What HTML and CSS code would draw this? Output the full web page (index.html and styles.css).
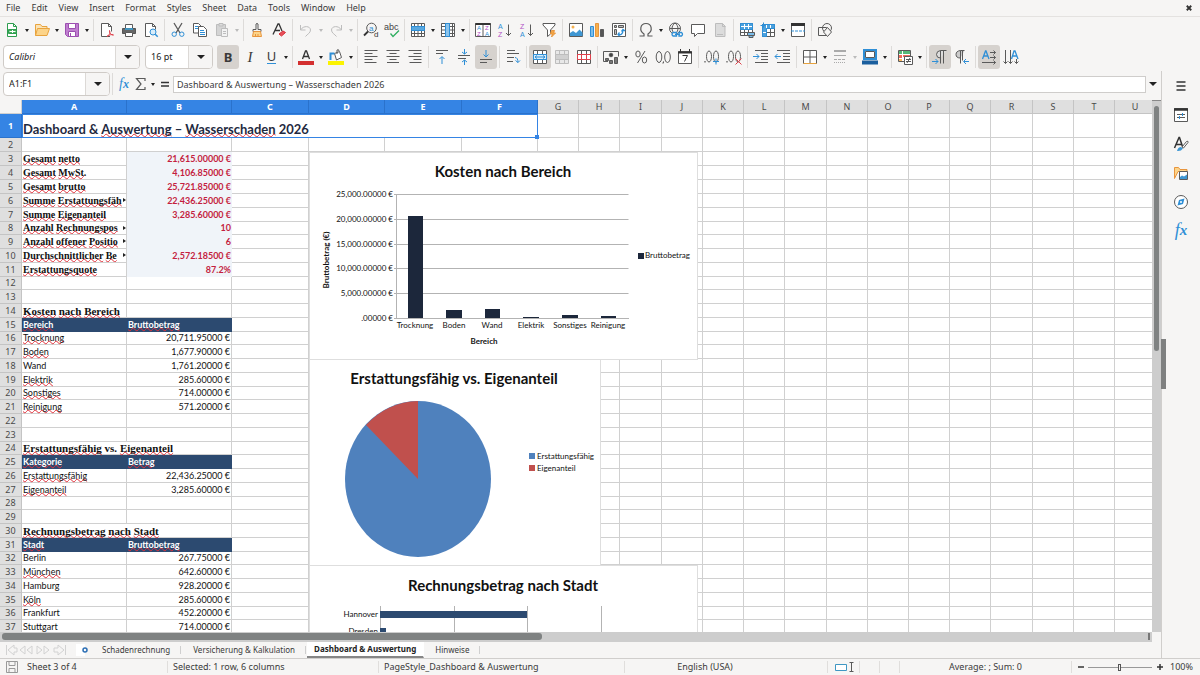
FILE: index.html
```html
<!DOCTYPE html>
<html lang="de">
<head>
<meta charset="utf-8">
<title>Dashboard &amp; Auswertung</title>
<link rel="stylesheet" href="styles.css">
</head>
<body>
<nav class="menubar" aria-label="Menu">
  <button>File</button><button>Edit</button><button>View</button><button>Insert</button><button>Format</button><button>Styles</button><button>Sheet</button><button>Data</button><button>Tools</button><button>Window</button><button>Help</button>
  <button class="close" aria-label="Close document"><svg class="ic" viewBox="0 0 16 16"><path class="d" stroke-width="2.4" d="M5 5l6 6M11 5l-6 6"/></svg></button>
</nav>

<div class="toolbar standard" role="toolbar" aria-label="Standard">
  <button class="tb" aria-label="New"><svg class="ic" viewBox="0 0 16 16"><path fill="#fff" stroke="#2e9e4f" d="M3.5 1.5h6l3 3v10h-9z"/><path stroke="#2e9e4f" d="M9.5 1.5v3h3"/><path fill="#43b05c" stroke="#2e9e4f" d="M4.500 7.500h8v4h-8z"/><path stroke="#fff" d="M5.500 9.500h6M8.500 8v3"/></svg></button><button class="caret" aria-label="New options"></button>
  <button class="tb" aria-label="Open"><svg class="ic" viewBox="0 0 16 16"><path fill="#fbe3b5" stroke="#e8a33d" d="M1.500 13.500v-11h5l1.500 2h5v2"/><path fill="#fcd48a" stroke="#e8a33d" d="M3.500 6.500h12l-2.500 7h-11.500z"/></svg></button><button class="caret" aria-label="Open options"></button>
  <button class="tb" aria-label="Save"><svg class="ic" viewBox="0 0 16 16"><path fill="#c07fd0" stroke="#9c4fb0" d="M1.500 1.500h13v13h-11l-2-2z"/><path fill="#fff" stroke="#9c4fb0" d="M4.500 1.500h7v5h-7z"/><path fill="#fff" stroke="#9c4fb0" d="M4.500 9.500h7v5h-7z"/><path stroke="#9c4fb0" d="M6.500 11v3"/></svg></button><button class="caret" aria-label="Save options"></button>
  <span class="sep"></span>
  <button class="tb" aria-label="Export as PDF"><svg class="ic" viewBox="0 0 16 16"><path fill="#fff" class="k" d="M11 14.500h-8.500v-13h7l3 3v5"/><path class="k" d="M9.500 1.500v3h3"/><path class="r" d="M8 14.500c3-2 3-4 2.500-6c0 3 1.500 4.500 4 4.500c-2-1-4.500 0-6.500 1.500"/></svg></button>
  <button class="tb" aria-label="Print"><svg class="ic" viewBox="0 0 16 16"><path fill="#fff" class="k" d="M4.500 2.500h7v4h-7z"/><path fill="#666" stroke="#555" d="M1.500 6.500h13v5h-13z"/><path stroke="#3aa6dd" stroke-width="1.500" d="M4 7h8"/><path fill="#fff" class="k" d="M4.500 10.500h7v4h-7z"/></svg></button>
  <button class="tb" aria-label="Print preview"><svg class="ic" viewBox="0 0 16 16"><path fill="#fff" class="k" d="M7 14.500h-4.500v-13h7l3 3v3"/><path class="k" d="M9.500 1.500v3h3"/><circle fill="#d7ecfa" class="b" cx="10" cy="10" r="3"/><path class="b" stroke-width="1.500" d="M12.200 12.200l2.500 2.500"/></svg></button>
  <span class="sep"></span>
  <button class="tb" aria-label="Cut"><svg class="ic" viewBox="0 0 16 16"><path class="k" stroke-width="1.300" d="M4 1l6 10M12 1l-6 10"/><circle class="b" cx="4.200" cy="12.200" r="2.200"/><circle class="b" cx="11.800" cy="12.200" r="2.200"/></svg></button>
  <button class="tb" aria-label="Copy"><svg class="ic" viewBox="0 0 16 16"><path fill="#fff" class="k" d="M1.500 1.500h5l2.500 2.500v7h-7.500z"/><path fill="#fff" class="k" d="M6.500 4.500h5l3 3v7h-8z"/><path class="b" d="M3 4.500h3M3 6.500h3M8 8.500h4M8 10.500h5M8 12.500h5"/></svg></button>
  <button class="tb" aria-label="Paste" disabled><svg class="ic" viewBox="0 0 16 16"><path fill="#d4d4d4" class="g" d="M2.500 2.500h9v11h-9z"/><path fill="#ddd" class="g" d="M5 1.500h4v2.500h-4z"/><path fill="#f3f3f3" class="g" d="M7.500 6.500h6v8h-6z"/><path class="g" d="M9 9.500h3M9 11.500h3"/></svg></button><button class="caret" aria-label="Paste options" disabled></button>
  <span class="sep"></span>
  <button class="tb" aria-label="Clone formatting"><svg class="ic" viewBox="0 0 16 16"><path class="k" d="M7 7.500v-5.500q1-1.200 2 0v5.500h3v2h-8v-2z"/><path fill="#fcd48a" stroke="#e8953d" d="M4.500 9.500h7l1 5h-9zM6.500 12v2M9 12v2"/></svg></button>
  <button class="tb" aria-label="Clear formatting"><svg class="ic" viewBox="0 0 16 16"><path class="d" stroke-width="1.300" d="M2 12.500l5-10.500h1l3 7M4 8.500h5"/><path fill="#e8505b" stroke="#d8303b" d="M8 12l4-3 2.500 1.500-4 3.500z"/></svg></button>
  <span class="sep"></span>
  <button class="tb" aria-label="Undo" disabled><svg class="ic" viewBox="0 0 16 16"><path class="g" d="M2.500 3v5h5M2.500 8c3-5 10-4 10 0c0 3-3 4-5 6.500"/></svg></button><button class="caret" aria-label="Undo steps" disabled></button>
  <button class="tb" aria-label="Redo" disabled><svg class="ic" viewBox="0 0 16 16"><path class="g" d="M13.500 3v5h-5M13.500 8c-3-5-10-4-10 0c0 3 3 4 5 6.500"/></svg></button><button class="caret" aria-label="Redo steps" disabled></button>
  <span class="sep"></span>
  <button class="tb snug" aria-label="Find and replace"><svg class="ic" viewBox="0 0 16 16"><circle class="k" cx="8.500" cy="6" r="4.800"/><path class="d" stroke-width="1.800" d="M5 9.500l-4 4"/><text x="6" y="8.500" font-size="8" fill="#2f8fd6">a</text><text x="11" y="15" font-size="8" fill="#333">d</text></svg></button>
  <button class="tb snug" aria-label="Spelling"><svg class="ic" viewBox="0 0 16 16"><text x="0" y="8" font-size="9" fill="#444">abc</text><path stroke="#2fae5f" stroke-width="1.300" d="M6.500 11.500l2.500 3 6-6"/></svg></button>
  <span class="sep"></span>
  <button class="tb" aria-label="Row"><svg class="ic" viewBox="0 0 16 16"><path fill="#fff" class="k" d="M1.500 1.500h13v13h-13zM4.500 1.500v13M8 1.500v13M11.500 1.500v13M1.500 11.500h13"/><path fill="#59a8e0" class="b" d="M1.500 4.500h13v4h-13z"/></svg></button><button class="caret" aria-label="Row options"></button>
  <button class="tb" aria-label="Column"><svg class="ic" viewBox="0 0 16 16"><path fill="#fff" class="k" d="M1.500 1.500h13v13h-13zM1.500 4.500h13M1.500 8h13M1.500 11.500h13M12.500 1.500v13"/><path fill="#8cc4ec" class="b" d="M5.500 1.500h4v13h-4z"/></svg></button><button class="caret" aria-label="Column options"></button>
  <span class="sep"></span>
  <button class="tb" aria-label="Sort"><svg class="ic" viewBox="0 0 16 16"><path fill="#fff" class="k" d="M.5 1.500h15v13h-15zM8 1.500v13"/><path class="d" stroke-width="2" d="M.5 2h15"/><text x="2" y="7.500" font-size="6" fill="#2f8fd6">A</text><text x="2" y="14" font-size="6" fill="#b14fc5">Z</text><text x="10" y="7.500" font-size="6" fill="#b14fc5">Z</text><text x="10" y="14" font-size="6" fill="#2f8fd6">A</text></svg></button>
  <button class="tb" aria-label="Sort ascending"><svg class="ic" viewBox="0 0 16 16"><text x="1" y="7" font-size="7" fill="#2f8fd6">A</text><text x="1" y="15" font-size="7" fill="#b14fc5">Z</text><path class="k" d="M11.500 2.500v11M9 11l2.500 2.500 2.500-2.500"/></svg></button>
  <button class="tb" aria-label="Sort descending"><svg class="ic" viewBox="0 0 16 16"><text x="1" y="7" font-size="7" fill="#b14fc5">Z</text><text x="1" y="15" font-size="7" fill="#2f8fd6">A</text><path class="k" d="M11.500 2.500v11M9 11l2.500 2.500 2.500-2.500"/></svg></button>
  <button class="tb" aria-label="AutoFilter"><svg class="ic" viewBox="0 0 16 16"><path fill="#fff" class="k" d="M2 1.500h12v1.500l-4.500 5v4l-3 2.500v-6.500l-4.500-5z"/><path fill="#f5a742" stroke="#e8953d" d="M10.500 8.500h3l-1 2.500h2l-4 4 1-3h-2z"/></svg></button>
  <span class="sep"></span>
  <button class="tb snug" aria-label="Insert image"><svg class="ic" viewBox="0 0 16 16"><path fill="#fff" class="k" d="M1.500 1.500h13v13h-13z"/><circle cx="5" cy="5" r="1.500" fill="#f5b14f"/><path fill="#3f97d3" d="M2 14v-3l3-2 3 2 3.500-3.500 3 3v3.500z"/></svg></button>
  <button class="tb" aria-label="Insert chart"><svg class="ic" viewBox="0 0 16 16"><path fill="#7bbdea" class="b" d="M1.500 4.500h3v10h-3z"/><path fill="#f5b14f" stroke="#e8953d" d="M6.500 1.500h3v13h-3z"/><path fill="#555" class="k" d="M11.500 7.500h3v7h-3z"/></svg></button>
  <button class="tb" aria-label="Pivot table"><svg class="ic" viewBox="0 0 16 16"><path fill="#fff" class="k" d="M1.500 1.500h13v13h-13z"/><path fill="#bbb" class="k" d="M3.500 3.500h2v2h-2zM7.500 3.500h5v2h-5zM3.500 7.500h2v5h-2z"/><path class="b" stroke-width="1.300" d="M7 12.500c3 1 5-1 5-4.500M10.500 9.500l1.500-2 2 1.500M8.500 10.500l-1.500 2 1.500 1.500"/></svg></button>
  <span class="sep"></span>
  <button class="tb" aria-label="Special character"><svg class="ic" viewBox="0 0 16 16"><path class="k" stroke-width="1.200" d="M1.500 14h4.500v-2c-5-3-4-10.500 2-10.500s7 7.500 2 10.500v2h4.500"/></svg></button><button class="caret" aria-label="More characters"></button>
  <button class="tb" aria-label="Insert hyperlink"><svg class="ic" viewBox="0 0 16 16"><circle class="k" cx="7" cy="6.500" r="5.500"/><path class="k" d="M1.500 6.500h11M7 1c-4 3-4 8 0 11M7 1c4 3 4 8 0 11"/><path fill="#f6f5f4" class="b" stroke-width="1.300" d="M5 10.500h3.500v3.500h-3.500q-2-1.700 0-3.500zM11 10.500h2.500q2 1.700 0 3.500h-2.500zM7 12.300h5"/></svg></button>
  <button class="tb" aria-label="Insert comment"><svg class="ic" viewBox="0 0 16 16"><path fill="#fff" class="k" d="M1.500 2.500h13v9h-7l-3 3v-3h-3z"/></svg></button>
  <button class="tb" aria-label="Headers and footers" disabled><svg class="ic" viewBox="0 0 16 16"><path fill="#dcdcdc" class="g" d="M3.500 1.500h7l2.500 2.500v10.500h-9.500z"/><path class="g" d="M10.500 1.500v3h3M5 12.500h6"/></svg></button>
  <span class="sep"></span>
  <button class="tb snug" aria-label="Define print area"><svg class="ic" viewBox="0 0 16 16"><path fill="#fff" class="k" d="M1.500 1.500h12v12h-12zM5.500 1.500v12M9.500 1.500v12M1.500 10.500h12"/><path fill="#4ba0dc" class="b" d="M1.500 1.500h12v6h-12z"/><path stroke="#fff" d="M5.500 2v5M9.500 2v5M2 4.500h11"/><path fill="#7bbdea" class="k" d="M8.500 10.500h7v3h-7zM10 13.500h4v2h-4z"/></svg></button>
  <button class="tb" aria-label="Freeze rows and columns"><svg class="ic" viewBox="0 0 16 16"><path fill="#fff" class="k" d="M2.500 2.500h12v12h-12zM10.500 2.500v12M2.500 10.500h12"/><path fill="#4ba0dc" class="b" d="M2.500 2.500h12v4h-8v8h-4z"/><path stroke="#fff" d="M6.500 3v3M10.500 3v3M3 10.500h3"/><path class="b" d="M.5 3.500h5M3.500.5v5"/></svg></button><button class="caret" aria-label="Freeze options"></button>
  <button class="tb" aria-label="Split window"><svg class="ic" viewBox="0 0 16 16"><path fill="#fff" class="k" d="M1.500 1.500h13v13h-13z"/><path class="d" stroke-width="3" d="M1 2.500h14"/><path class="b" stroke-dasharray="3 1" d="M1 9h14"/></svg></button>
  <span class="sep"></span>
  <button class="tb" aria-label="Show draw functions"><svg class="ic" viewBox="0 0 16 16"><path class="k" d="M1.500 5.500h8v8h-8z"/><circle class="k" cx="10" cy="6" r="4.500"/><path fill="#f6f5f4" class="k" d="M10.500 5.500l4 4.500-4 4.500-4-4.500z"/></svg></button>
</div>

<div class="toolbar formatting" role="toolbar" aria-label="Formatting">
  <div class="combo font-name"><input class="italic" aria-label="Font name" value="Calibri"><button class="drop" aria-label="Font list"></button></div>
  <div class="combo font-size"><input aria-label="Font size" value="16 pt"><button class="drop" aria-label="Size list"></button></div>
  <button class="tb on letter bold" aria-label="Bold">B</button>
  <button class="tb letter cursive" aria-label="Italic">I</button>
  <button class="tb snug letter" aria-label="Underline"><span class="under">U</span></button><button class="caret" aria-label="Underline styles"></button>
  <span class="sep"></span>
  <button class="tb" aria-label="Font color"><svg class="ic" viewBox="0 0 16 16"><path class="d" stroke-width="1.300" d="M4.500 10l3-8h1l3 8M5.500 7.500h5"/><path fill="#d43030" d="M0 12h16v4h-16z"/></svg></button><button class="caret" aria-label="Font colors"></button>
  <button class="tb" aria-label="Highlighting color"><svg class="ic" viewBox="0 0 16 16"><path fill="#fff" class="k" d="M6.500 4.500l5-2 2 6-5 2.500zM9 5v-4q2-1 2 1"/><path stroke="#2f8fd6" stroke-width="2" d="M2.500 11v-6.500h4"/><path fill="#fbf300" d="M0 12h16v4h-16z"/></svg></button><button class="caret" aria-label="Highlighting colors"></button>
  <span class="sep"></span>
  <button class="tb" aria-label="Align left"><svg class="ic" viewBox="0 0 16 16"><path class="k" d="M1.500 1.500h13M1.500 4.500h8M1.500 7.500h13M1.500 10.500h8M1.500 13.500h12"/></svg></button>
  <button class="tb" aria-label="Center horizontally"><svg class="ic" viewBox="0 0 16 16"><path class="k" d="M1.500 1.500h13M4.500 4.500h7M1.500 7.500h13M4.500 10.500h7M2 13.500h12"/></svg></button>
  <button class="tb" aria-label="Align right"><svg class="ic" viewBox="0 0 16 16"><path class="k" d="M1.500 1.500h13M6.500 4.500h8M1.500 7.500h13M6.500 10.500h8M2.500 13.500h12"/></svg></button>
  <span class="sep"></span>
  <button class="tb" aria-label="Align top"><svg class="ic" viewBox="0 0 16 16"><path class="k" d="M2 1.500h12M2 4.500h7"/><path class="b" d="M8 15v-7M5.500 10l2.500-2.500 2.500 2.500"/></svg></button>
  <button class="tb" aria-label="Center vertically"><svg class="ic" viewBox="0 0 16 16"><path class="k" d="M2 6.500h12M2 9.500h8"/><path class="b" d="M8.500 0v5M6 3l2.500 2 2.500-2M8.500 16v-5M6 13l2.500-2 2.500 2"/></svg></button>
  <button class="tb on" aria-label="Align bottom"><svg class="ic" viewBox="0 0 16 16"><path class="k" d="M2 10.500h12M2 13.500h7"/><path class="b" d="M8 1v7M5.500 5.500l2.500 2.500 2.500-2.500"/></svg></button>
  <span class="sep"></span>
  <button class="tb" aria-label="Wrap text"><svg class="ic" viewBox="0 0 16 16"><path class="k" d="M2 1.500h8M2 4.500h12M2 8.500h7M2 12.500h6"/><path class="b" d="M10 8.500q3 0 3 5M10.500 11.500l2.500 2 2-2"/></svg></button>
  <span class="sep"></span>
  <button class="tb on" aria-label="Merge and center cells"><svg class="ic" viewBox="0 0 16 16"><path fill="#fff" class="k" d="M1.500 1.500h13v13h-13zM5.500 1.500v4M10.500 1.500v4M5.500 10.500v4M10.500 10.500v4"/><path fill="#d7ecfa" class="b" d="M1.500 5.500h13v5h-13zM3 8h10M5 6.500l-2 1.500 2 1.500M11 6.500l2 1.500-2 1.500"/></svg></button>
  <button class="tb" aria-label="Merge cells" disabled><svg class="ic" viewBox="0 0 16 16"><path fill="#e8e8e8" class="g" d="M1.500 1.500h13v13h-13zM5.500 1.500v4M10.500 1.500v4M5.500 10.500v4M10.500 10.500v4"/><path fill="#d0d0d0" class="g" d="M1.500 5.500h13v5h-13z"/></svg></button>
  <button class="tb" aria-label="Unmerge cells"><svg class="ic" viewBox="0 0 16 16"><path fill="#fff" class="k" d="M1.500 1.500h13v13h-13zM5.500 1.500v4M10.500 1.500v4M5.500 10.500v4M10.500 10.500v4"/><path fill="#fff" class="r" d="M1.500 5.500h13v5h-13zM5.500 5.500v5M10.500 5.500v5"/></svg></button>
  <span class="sep"></span>
  <button class="tb" aria-label="Format as currency"><svg class="ic" viewBox="0 0 16 16"><path class="k" d="M5 12.500h-4.500v-10h15v5"/><circle fill="#444" class="k" cx="8" cy="6" r="1.800"/><path fill="#777" class="k" d="M2.500 9.500h3v2h-3zM6.500 11.500h3v3h-3zM11.500 8.500h3v6h-3z"/></svg></button><button class="caret" aria-label="Currencies"></button>
  <button class="tb" aria-label="Format as percent"><svg class="ic" viewBox="0 0 16 16"><ellipse class="k" cx="5" cy="5" rx="2.200" ry="3"/><ellipse class="k" cx="11.500" cy="11" rx="2.200" ry="3"/><path class="k" d="M12 2l-7.500 12"/></svg></button>
  <button class="tb" aria-label="Format as number"><svg class="ic" viewBox="0 0 16 16"><ellipse class="k" cx="4" cy="8" rx="2.800" ry="5.500"/><ellipse class="k" cx="12.500" cy="8" rx="2.800" ry="5.500"/><path class="d" d="M8.500 12.500l-.5 2"/></svg></button>
  <button class="tb" aria-label="Format as date"><svg class="ic" viewBox="0 0 16 16"><path fill="#fff" class="k" d="M1.500 2.500h13v12h-13z"/><path class="d" stroke-width="2" d="M1 3.500h14"/><path class="d" d="M3.500 0v4M12.500 0v4M5.500 6.500h5l-3 6"/></svg></button>
  <span class="sep"></span>
  <button class="tb" aria-label="Add decimal place"><svg class="ic" viewBox="0 0 16 16"><path class="d" d="M1 12v1.500"/><ellipse class="k" cx="5" cy="7.500" rx="2.500" ry="5.500"/><ellipse class="k" cx="12" cy="7.500" rx="2.500" ry="5.500"/><path class="b" d="M9 12.500h6M12 9.500v6"/></svg></button>
  <button class="tb" aria-label="Delete decimal place"><svg class="ic" viewBox="0 0 16 16"><path class="d" d="M1 12v1.500"/><ellipse class="k" cx="5" cy="7.500" rx="2.500" ry="5.500"/><ellipse class="k" cx="12" cy="7.500" rx="2.500" ry="5.500"/><path class="r" d="M9.500 9.500l6 6M15.500 9.500l-6 6"/></svg></button>
  <span class="sep"></span>
  <button class="tb" aria-label="Increase indent"><svg class="ic" viewBox="0 0 16 16"><path class="k" d="M2 1.500h13M8 4.500h7M8 7.500h7M8 10.500h7M2 13.500h13"/><path class="b" d="M0 7.500h6M3.500 5l2.500 2.500-2.500 2.500"/></svg></button>
  <button class="tb" aria-label="Decrease indent"><svg class="ic" viewBox="0 0 16 16"><path class="k" d="M2 1.500h13M8 4.500h7M8 7.500h7M8 10.500h7M2 13.500h13"/><path class="b" d="M6 7.500h-6M2.500 5l-2.500 2.500 2.500 2.500"/></svg></button>
  <span class="sep"></span>
  <button class="tb" aria-label="Borders"><svg class="ic" viewBox="0 0 16 16"><path fill="#fff" class="k" d="M1.500 1.500h13v13h-13z"/><path class="k" d="M8 1.500v13M1.500 8h13"/><path stroke="#e8a33d" d="M1.500 14.500h13"/></svg></button><button class="caret" aria-label="Border options"></button>
  <button class="tb" aria-label="Border style" disabled><svg class="ic" viewBox="0 0 16 16"><path stroke="#aaa" stroke-width="2" d="M2 2h12"/><path stroke="#aaa" d="M2 6.500h12"/><path stroke="#aaa" stroke-dasharray="3 1" d="M2 10.500h12"/><path stroke="#aaa" stroke-dasharray="1 1" d="M2 13.500h12"/></svg></button><button class="caret" aria-label="Border styles" disabled></button>
  <button class="tb" aria-label="Border color"><svg class="ic" viewBox="0 0 16 16"><path fill="#bfe0f5" class="b" stroke-width="2" d="M2 1h12v9h-12z"/><path fill="#fff" class="k" d="M3.500 2.500h9v6h-9z"/><path fill="#1b5f9e" d="M0 11.500h16v4h-16z"/></svg></button><button class="caret" aria-label="Border colors"></button>
  <span class="sep"></span>
  <button class="tb" aria-label="Conditional formatting"><svg class="ic" viewBox="0 0 16 16"><path fill="#fff" class="k" d="M1.500 1.500h12v11h-12z"/><path fill="#57b878" d="M2 2h3v3h-3zM6 2h7v3h-7z"/><path fill="#ef6a5c" d="M2 6h3v3h-3zM6 6h7v2h-7z"/><path fill="#fcb860" d="M2 10h3v2h-3z"/><path fill="#fff" class="k" d="M7.500 7.500h8v8h-8zM9 10.500h5M9 12.500h5M13 9l-3 5"/></svg></button><button class="caret" aria-label="Conditional options"></button>
  <span class="sep"></span>
  <button class="tb on" aria-label="Left-to-right"><svg class="ic" viewBox="0 0 16 16"><path fill="#ddd" class="k" d="M8.500 9q-4 0-4-3.500t4-4h6M8.500 1.500v13M11.500 1.500v13"/><path class="b" d="M0 12.500h6M3.500 10l2.500 2.500-2.500 2.500"/></svg></button>
  <button class="tb" aria-label="Right-to-left"><svg class="ic" viewBox="0 0 16 16"><path fill="#ccc" class="k" d="M6.500 9q-4.500 0-4.500-3.500t4.500-4h4M6.500 1.500v13M8.500 1.500v10"/><path class="b" d="M15 12.500h-5M12 10l-2.500 2.500 2.500 2.500"/></svg></button>
  <span class="sep"></span>
  <button class="tb on" aria-label="Text direction from left to right"><svg class="ic" viewBox="0 0 16 16"><path class="b" stroke-width="1.300" d="M1.500 10l3-8h.5l3 8M2.500 7h4.500"/><path class="k" d="M9 3.500h5.500M12.500 1.500l2 2-2 2M9 8.500h5.500M12.500 6.500l2 2-2 2M1 13.500h13.500M12.500 11.500l2 2-2 2"/></svg></button>
  <button class="tb" aria-label="Text direction from top to bottom"><svg class="ic" viewBox="0 0 16 16"><path class="k" d="M2.500 1v13.500M.5 12.500l2 2 2-2M7.500 1v13.500M5.500 12.500l2 2 2-2M13.500 10v4.500M11.500 12.500l2 2 2-2"/><path class="b" stroke-width="1.300" d="M8.500 10l2.500-8h1l3 8M9.500 7h4.500"/></svg></button>
</div>

<div class="work">
  <main class="document">
    <div class="formula-bar">
      <div class="combo name-box"><input aria-label="Name box" value="A1:F1"><button class="drop" aria-label="Named ranges"></button></div>
      <span class="sep"></span>
      <button class="fb fx" aria-label="Function wizard">f<i>x</i></button>
      <button class="fb" aria-label="Select function"><svg class="ic" viewBox="0 0 16 16"><path class="k" stroke-width="1.200" d="M12 5v-2.500h-8.500l4.500 5.500-4.500 5.500h8.500v-2.500"/></svg></button><button class="caret" aria-label="Functions"></button>
      <button class="fb" aria-label="Formula"><svg class="ic" viewBox="0 0 16 16"><path class="d" stroke-width="1.500" d="M4 6.500h8M4 10h8"/></svg></button>
      <input class="formula" aria-label="Input line" value="Dashboard &amp; Auswertung – Wasserschaden 2026">
      <button class="drop plain" aria-label="Expand formula bar"></button>
    </div>

    <div class="view">
      <div class="sheet">
        <table class="cells">
          <colgroup><col class="w22"><col class="w105"><col class="w105"><col class="w77"><col class="w76"><col class="w77"><col class="w76"><col class="w41"><col class="w41"><col class="w42"><col class="w41"><col class="w41"><col class="w41"><col class="w42"><col class="w41"><col class="w41"><col class="w41"><col class="w41"><col class="w42"><col class="w41"><col class="w41"><col class="w41"></colgroup>
          <thead><tr><td class="corner"></td><th class="sel">A</th><th class="sel">B</th><th class="sel">C</th><th class="sel">D</th><th class="sel">E</th><th class="sel">F</th><th>G</th><th>H</th><th>I</th><th>J</th><th>K</th><th>L</th><th>M</th><th>N</th><th>O</th><th>P</th><th>Q</th><th>R</th><th>S</th><th>T</th><th>U</th></tr></thead>
          <tbody>
            <tr class="title"><th class="sel">1</th><td colspan="6" class="picked">Dashboard &amp; <u>Auswertung</u> – <u>Wasserschaden</u> 2026<span class="handle"></span></td></tr>
            <tr><th>2</th></tr>
            <tr><th>3</th><td class="label"><u>Gesamt</u> <u>netto</u></td><td class="kpi">21,615.00000 €</td></tr>
            <tr><th>4</th><td class="label"><u>Gesamt</u> <u>MwSt</u>.</td><td class="kpi">4,106.85000 €</td></tr>
            <tr><th>5</th><td class="label"><u>Gesamt</u> <u>brutto</u></td><td class="kpi">25,721.85000 €</td></tr>
            <tr><th>6</th><td class="label cut"><u>Summe</u> <u>Erstattungsfäh</u></td><td class="kpi">22,436.25000 €</td></tr>
            <tr><th>7</th><td class="label"><u>Summe</u> <u>Eigenanteil</u></td><td class="kpi">3,285.60000 €</td></tr>
            <tr><th>8</th><td class="label cut"><u>Anzahl</u> <u>Rechnungspos</u></td><td class="kpi">10</td></tr>
            <tr><th>9</th><td class="label cut"><u>Anzahl</u> <u>offener</u> <u>Positio</u></td><td class="kpi">6</td></tr>
            <tr><th>10</th><td class="label cut"><u>Durchschnittlicher</u> <u>Be</u></td><td class="kpi">2,572.18500 €</td></tr>
            <tr><th>11</th><td class="label"><u>Erstattungsquote</u></td><td class="kpi">87.2%</td></tr>
            <tr><th>12</th></tr>
            <tr><th>13</th></tr>
            <tr><th>14</th><td class="label head"><u>Kosten</u> <u>nach</u> <u>Bereich</u></td></tr>
            <tr class="band"><th>15</th><td><u>Bereich</u></td><td><u>Bruttobetrag</u></td></tr>
            <tr><th>16</th><td><u>Trocknung</u></td><td class="num">20,711.95000 €</td></tr>
            <tr><th>17</th><td><u>Boden</u></td><td class="num">1,677.90000 €</td></tr>
            <tr><th>18</th><td>Wand</td><td class="num">1,761.20000 €</td></tr>
            <tr><th>19</th><td><u>Elektrik</u></td><td class="num">285.60000 €</td></tr>
            <tr><th>20</th><td><u>Sonstiges</u></td><td class="num">714.00000 €</td></tr>
            <tr><th>21</th><td><u>Reinigung</u></td><td class="num">571.20000 €</td></tr>
            <tr><th>22</th></tr>
            <tr><th>23</th></tr>
            <tr><th>24</th><td colspan="2" class="label head"><u>Erstattungsfähig</u> vs. <u>Eigenanteil</u></td></tr>
            <tr class="band"><th>25</th><td><u>Kategorie</u></td><td><u>Betrag</u></td></tr>
            <tr><th>26</th><td><u>Erstattungsfähig</u></td><td class="num">22,436.25000 €</td></tr>
            <tr><th>27</th><td><u>Eigenanteil</u></td><td class="num">3,285.60000 €</td></tr>
            <tr><th>28</th></tr>
            <tr><th>29</th></tr>
            <tr><th>30</th><td colspan="2" class="label head"><u>Rechnungsbetrag</u> <u>nach</u> <u>Stadt</u></td></tr>
            <tr class="band"><th>31</th><td><u>Stadt</u></td><td><u>Bruttobetrag</u></td></tr>
            <tr><th>32</th><td>Berlin</td><td class="num">267.75000 €</td></tr>
            <tr><th>33</th><td><u>München</u></td><td class="num">642.60000 €</td></tr>
            <tr><th>34</th><td>Hamburg</td><td class="num">928.20000 €</td></tr>
            <tr><th>35</th><td><u>Köln</u></td><td class="num">285.60000 €</td></tr>
            <tr><th>36</th><td>Frankfurt</td><td class="num">452.20000 €</td></tr>
            <tr><th>37</th><td>Stuttgart</td><td class="num">714.00000 €</td></tr>
          </tbody>
        </table>

        <svg class="chart costs" viewBox="1 1 387 206" role="img" aria-label="Kosten nach Bereich">
          <text class="ct" x="194" y="25">Kosten nach Bereich</text>
          <path class="axis" d="M87.500 42.500h232M87.500 67.500h232M87.500 92.500h232M87.500 116.500h232M87.500 141.500h232M85 166.500h235M87.500 42v124M85 42.500h3M85 67.500h3M85 92.500h3M85 116.500h3M85 141.500h3"/>
          <path fill="#1c273b" d="M99 64h15v102h-15zM137 158h16v8h-16zM176 157h15v9h-15zM214 165h16v1h-16zM253 163h16v3h-16zM292 164h15v2h-15z"/>
          <g class="end"><text x="84" y="45">25,000.00000 €</text><text x="84" y="70">20,000.00000 €</text><text x="84" y="95">15,000.00000 €</text><text x="84" y="119">10,000.00000 €</text><text x="84" y="144">5,000.00000 €</text><text x="84" y="169">.00000 €</text></g>
          <g class="mid"><text x="106" y="176">Trocknung</text><text x="145" y="176">Boden</text><text x="183" y="176">Wand</text><text x="222" y="176">Elektrik</text><text x="261" y="176">Sonstiges</text><text x="299" y="176">Reinigung</text><text class="strong" x="175" y="192">Bereich</text><text class="strong" transform="translate(20 108) rotate(-90)">Bruttobetrag (€)</text></g>
          <path fill="#1c273b" d="M329 101h6v6h-6z"/><text x="336" y="106">Bruttobetrag</text>
        </svg>
        <svg class="chart share" viewBox="1 1 290 206" role="img" aria-label="Erstattungsfähig vs. Eigenanteil">
          <text class="ct" x="145" y="25">Erstattungsfähig vs. Eigenanteil</text>
          <ellipse cx="109" cy="120" rx="73" ry="78" fill="#4f81bd"/>
          <path fill="#c0504d" d="M109 120V42A73 78 0 0 0 57 66z"/>
          <path fill="#4f81bd" d="M220 94h6v6h-6z"/><path fill="#c0504d" d="M220 106h6v6h-6z"/>
          <text x="228" y="100">Erstattungsfähig</text><text x="228" y="112">Eigenanteil</text>
        </svg>
        <svg class="chart cities" viewBox="1 1 387 206" role="img" aria-label="Rechnungsbetrag nach Stadt">
          <text class="ct" x="194" y="26">Rechnungsbetrag nach Stadt</text>
          <path class="axis" d="M71.500 41v160M145.500 41v160M218.500 41v160M292.500 41v160"/>
          <path fill="#2c4a70" d="M71 46h147v7h-147zM71 63h6v7h-6z"/>
          <g class="end"><text x="69" y="52">Hannover</text><text x="69" y="69">Dresden</text></g>
        </svg>
      </div>
      <div class="vscroll"><span class="thumb"></span></div>
      <div class="hscroll"><span class="thumb"></span><span class="stop"></span></div>
    </div>

    <div class="tabs">
      <svg class="nav" viewBox="0 0 62 14" aria-hidden="true"><path d="M1.500 2v10M9 2l-6 5 6 5v-3h3v-4h-3zM20 3l-5 4 5 4zM27 3l-5 4 5 4zM32 3l5 4-5 4zM39 3l5 4-5 4zM53 2l6 5-6 5v-3h-4v-4h4zM60.500 2v10"/></svg>
      <button class="add" aria-label="Add sheet"><svg class="ic" viewBox="0 0 16 16"><path fill="#fff" d="M2 2h9v12h-9z"/><circle cx="11" cy="8" r="2" stroke="#2c6fb5" stroke-width="1.500"/></svg></button>
      <button>Schadenrechnung</button><button>Versicherung &amp; Kalkulation</button><button class="active">Dashboard &amp; Auswertung</button><button>Hinweise</button>
    </div>
  </main>

  <aside class="sidebar" aria-label="Sidebar">
    <span class="grip"></span>
    <button aria-label="Sidebar settings"><svg class="ic" viewBox="0 0 16 16"><path class="d" stroke-width="1.500" d="M3.500 4h9M3.500 8h9M3.500 12h9"/></svg></button>
    <button aria-label="Properties"><svg class="ic" viewBox="0 0 16 16"><path fill="#fff" class="k" d="M1.500 1.500h13v13h-13z"/><path class="d" stroke-width="2.500" d="M1 2.500h14"/><path class="k" d="M4 7.500h8M4 10.500h8"/><path class="b" d="M9.500 6v3M6.500 9v3"/></svg></button>
    <button aria-label="Styles"><svg class="ic" viewBox="0 0 16 16"><path class="d" stroke-width="1.500" d="M1.500 12l4.500-10.500h.5l3 9M3 8.500h6"/><path fill="#3f97d3" d="M4 15q1-4 4-4l2 1.500q-2 3-6 2.500z"/><path fill="#fff" class="k" d="M9 11l4.500-5.500q2-1 1.500 1l-4.500 5.500z"/></svg></button>
    <button aria-label="Gallery"><svg class="ic" viewBox="0 0 16 16"><path fill="#fcd48a" stroke="#e8953d" d="M1.500 13.500v-11h4l1.500 2h7v2h-9z"/><path fill="#fff" class="k" d="M6.500 6.500h8v8h-8z"/><path fill="#3f97d3" d="M7 14v-2l2-1.500 2 1 3-2v4.500z"/></svg></button>
    <button aria-label="Navigator"><svg class="ic" viewBox="0 0 16 16"><circle fill="#fff" class="k" cx="8" cy="8" r="6.500"/><path fill="#2f8fd6" d="M11.500 4.500l-1.500 5.500-5.500 1.500 1.500-5.500z"/><circle cx="8" cy="8" r="1" fill="#fff"/></svg></button>
    <button class="fx big" aria-label="Functions">f<i>x</i></button>
  </aside>
</div>

<footer class="status">
  <span class="doc"><svg class="ic" viewBox="0 0 16 16"><path stroke="#999" d="M2.500 2.500h11v11h-11zM5 2.500v4h6v-4M5 13.500v-4h6v4"/></svg>Sheet 3 of 4</span>
  <span>Selected: 1 row, 6 columns</span>
  <span>PageStyle_Dashboard &amp; Auswertung</span>
  <span class="center language">English (USA)</span>
  <span class="mode"><svg class="wide" viewBox="0 0 22 14"><path fill="#fff" stroke="#3f97c3" d="M2.500 4.500h11v6h-11z"/><path class="k" d="M16.500 2.500h4M18.500 2.500v9M16.500 11.500h4"/></svg></span>
  <span></span><span></span>
  <span class="center">Average: ; Sum: 0</span>
  <span class="zoom"><button aria-label="Zoom out"><svg class="small" viewBox="0 0 8 8"><path class="d" stroke-width="1.500" d="M1 4h6"/></svg></button><input type="range" aria-label="Zoom" min="0" max="100" value="49"><button aria-label="Zoom in"><svg class="small" viewBox="0 0 8 8"><path class="d" stroke-width="1.500" d="M1 4h6M4 1v6"/></svg></button><b>100%</b></span>
</footer>
<script src="sheet.js"></script>
</body>
</html>
```

FILE: styles.css
```css
* { box-sizing: border-box; }
body {
  margin: 0;
  height: 100vh;
  display: flex;
  flex-direction: column;
  overflow: hidden;
  background: #f6f5f4;
  color: #3a3a3a;
  font: 9px/12px "Noto Sans", sans-serif;
}
button, input { font: inherit; color: inherit; margin: 0; padding: 0; border: 0; background: none; }
svg { fill: none; stroke: none; display: block; flex: none; }
.ic { width: 16px; height: 16px; overflow: visible; font-family: "Liberation Sans", sans-serif; }
.k { stroke: #5a5a5a; }
.d { stroke: #333; }
.b { stroke: #2f8fd6; }
.r { stroke: #e0404a; }
.g { stroke: #bdbdbd; }

.menubar { display: flex; gap: 11px; height: 17px; padding: 0 3px 0 6px; border-bottom: 1px solid #e4e2e0; flex: none; align-items: center; }
.close { margin-left: auto; }
.close .ic { width: 16px; height: 12px; }

.toolbar { display: flex; align-items: center; flex: none; }
.standard { height: 26px; padding-left: 1px; }
.formatting { height: 28px; padding-left: 3px; }
.tb { width: 22px; height: 24px; display: flex; align-items: center; justify-content: center; border-radius: 3px; flex: none; }
.tb.snug { width: 21px; }
.tb.on { background: #d6d2ce; }
.letter { font-size: 13px; }
.letter.bold { font-weight: 700; }
.letter.cursive { font-family: "Liberation Serif", serif; font-style: italic; font-size: 15px; }
.under { border-bottom: 1px solid #2f8fd6; line-height: 13px; }
.caret { width: 8px; height: 22px; display: flex; align-items: center; justify-content: center; flex: none; }
.caret::before, .drop::before { content: ""; border: 2px solid transparent; border-top: 3px solid #222; border-bottom: 0; }
.caret:disabled::before { border-top-color: #bbb; }
.sep { width: 5px; height: 22px; flex: none; background: linear-gradient(#dddbd9, #dddbd9) center / 1px 100% no-repeat; }

.combo { display: flex; height: 24px; border: 1px solid #cfcbc7; border-radius: 4px; background: #fff; overflow: hidden; flex: none; }
.combo input { flex: 1; min-width: 0; padding-left: 5px; color: #222; }
.drop { width: 24px; display: flex; align-items: center; justify-content: center; background: #f6f5f4; border-left: 1px solid #dcd9d6; }
.drop::before { border-width: 4px 4px 0; }
.font-name { width: 137px; margin-right: 5px; }
.font-size { width: 68px; margin-right: 4px; }
.italic { font-style: italic; }

.work { display: flex; flex: 1; min-height: 0; }
.document { flex: 1; min-width: 0; display: flex; flex-direction: column; }
.formula-bar { display: flex; align-items: center; height: 26px; padding: 0 1px 0 3px; margin-bottom: 3px; flex: none; }
.name-box { width: 107px; }
.fb { width: 16px; height: 22px; display: flex; align-items: center; justify-content: center; flex: none; }
.fx { font: italic 14px "Liberation Serif", serif; color: #2f8fd6; width: 18px; }
.fx i { font-weight: 700; font-size: 12px; }
.formula { flex: 1; min-width: 0; height: 17px; border: 1px solid #cfcdcb; background: #fff; padding-left: 3px; }
.drop.plain { width: 14px; border: 0; background: none; }

.view { flex: 1; min-height: 0; display: grid; grid-template-columns: minmax(0, 1fr) 9px; grid-template-rows: minmax(0, 1fr) 10px; }
.sheet { position: relative; overflow: hidden; background: #fff; }
.vscroll { background: #cdcdcd; padding: 5px 2px; border-top: 1px solid #888; }
.vscroll .thumb { display: block; height: 47%; border-radius: 3px; background: #7f8282; }
.hscroll { background: #cdcdcd; padding: 1px 2px 2px; display: flex; justify-content: space-between; }
.hscroll .thumb { width: 47%; border-radius: 3px; background: #7f8282; }
.hscroll .stop { width: 2px; background: #777; }

.cells { table-layout: fixed; width: 1156px; border-collapse: separate; border-spacing: 0; font: 9px/12px Lato, sans-serif; color: #111; }
.w22 { width: 22px; } .w41 { width: 41px; } .w42 { width: 42px; } .w76 { width: 76px; } .w77 { width: 77px; } .w105 { width: 105px; }
.cells td, .cells th { padding: 0; border: solid #d0d0d0; border-width: 0 1px 1px 0; white-space: nowrap; vertical-align: bottom; }
.cells tr { height: 14px; }
.cells tbody tr:nth-child(4n+8) { height: 13px; }
.cells tbody tr.title { height: 24px; }
.cells th { font: 9px/12px "Noto Sans", sans-serif; color: #4a4a4a; background: #dfdfdf; border-color: #c4c4c4; text-align: center; vertical-align: middle; }
.cells th.sel { background: #3584e4; color: #fff; font-weight: 700; border-color: #2a72cc; }
.cells .corner { background: #f6f5f4; }
.cells td:not(.kpi) { padding-left: 1px; }
.cells u { text-decoration: underline wavy #e0303a 1px; text-decoration-skip-ink: none; text-underline-offset: -1px; }
.cells .picked { position: relative; font-size: 13px; line-height: 18px; font-weight: 700; color: #1f2a3f; border: 0; outline: 1px solid #3584e4; outline-offset: -1px; }
.handle { position: absolute; right: -1px; bottom: -1px; width: 4px; height: 4px; background: #3584e4; }
.cells .label { font: 700 10px/12px "Liberation Serif", serif; }
.cells .label.head { font-size: 11px; }
.cells .cut { position: relative; overflow: hidden; }
.cut::after { content: ""; position: absolute; right: 0; top: 4px; border: 2px solid transparent; border-left: 3px solid #222; border-right: 0; }
.cells .kpi { background: #f0f4f9; border-color: #f0f4f9; color: #c41e3f; font-weight: 700; text-align: right; }
.cells .num { text-align: right; padding-right: 1px; }
.cells .band td:not(.blank) { background: #2c4a70; border-color: #2c4a70; color: #fff; font-weight: 700; }

.chart { position: absolute; left: 309px; height: 208px; background: #fff; border: 1px solid #dedede; font: 8px Lato, sans-serif; }
.chart text { fill: #111; }
.costs { top: 52px; width: 389px; }
.share { top: 259px; width: 292px; }
.cities { top: 465px; width: 389px; }
.ct { font-size: 15px; font-weight: 700; text-anchor: middle; }
.axis { stroke: #b3b3b3; }
.end { text-anchor: end; }
.mid { text-anchor: middle; }
.strong { font-weight: 700; }

.tabs { display: flex; align-items: stretch; height: 16px; padding-left: 5px; flex: none; font-size: 8px; }
.nav { width: 62px; height: 14px; stroke: #d2d2d2; align-self: center; margin-right: 5px; }
.tabs button { padding: 0 11px; border-right: 1px solid transparent; background: linear-gradient(#cfcfcf, #cfcfcf) right / 1px 8px no-repeat; }
.tabs .add { padding: 0 0 0 2px; background: none; }
.tabs .active { background: #fff; font-weight: 700; padding: 0 7px; border-bottom: 2px solid #868686; color: #222; }

.sidebar { position: relative; width: 39px; border-left: 1px solid #d0cecc; display: flex; flex-direction: column; align-items: center; flex: none; }
.sidebar button { width: 29px; height: 29px; display: flex; align-items: center; justify-content: center; flex: none; }
.sidebar .big { font-size: 18px; }
.sidebar .big i { font-size: 15px; }
.grip { position: absolute; left: -1px; top: 268px; width: 5px; height: 50px; background: #7f8080; }

.status { display: grid; grid-template-columns: 168px 211px 246fr 203fr 32px 20px 20px 172fr 128px; height: 17px; align-items: center; border-top: 1px solid #d0cecc; flex: none; }
.status > span { height: 12px; padding-left: 5px; border-right: 1px solid #e0dedc; display: flex; align-items: center; white-space: nowrap; }
.status .doc { padding-left: 4px; gap: 7px; }
.status .center { justify-content: center; padding: 0; }
.status .language { padding-right: 42px; }
.wide { width: 22px; height: 14px; }
.status .zoom { border: 0; justify-content: space-between; padding: 0 7px 0 5px; }
.small { width: 8px; height: 8px; }
.zoom b { font-weight: 400; padding-left: 3px; }
.zoom input { appearance: none; width: 64px; height: 8px; background: linear-gradient(#999, #999) center / 100% 1px no-repeat; }
.zoom input::-webkit-slider-thumb { appearance: none; width: 3px; height: 7px; border: 1px solid #555; background: #f6f5f4; }
```

FILE: sheet.js
```js
// Fill every row with empty cells up to the last column of the header.
const columns = document.querySelectorAll(".cells thead th").length + 1;
for (const row of document.querySelectorAll(".cells tbody tr")) {
  let used = 0;
  for (const cell of row.cells) used += cell.colSpan;
  for (; used < columns; used++) {
    row.insertCell().className = "blank";
  }
}
```
